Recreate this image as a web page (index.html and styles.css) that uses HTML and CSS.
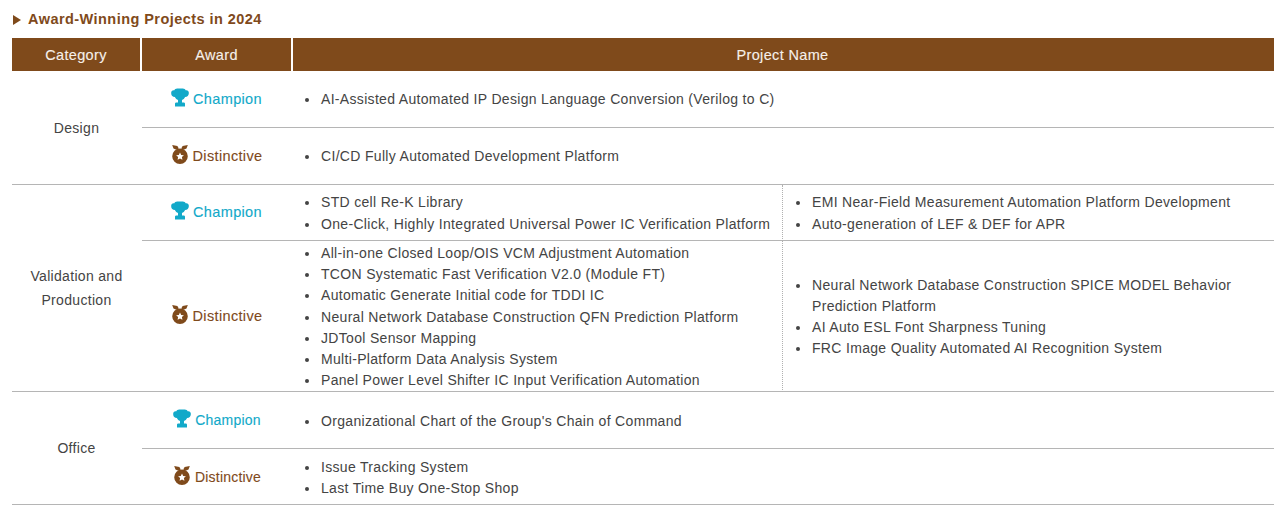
FILE: index.html
```html
<!DOCTYPE html>
<html lang="en">
<head>
<meta charset="utf-8">
<title>Award-Winning Projects in 2024</title>
<link rel="stylesheet" href="styles.css">
</head>
<body>
<svg class="defs" width="0" height="0" aria-hidden="true">
  <symbol id="trophy" viewBox="0 0 18 19">
    <path d="M6.200 0.500h5.600c1.500 0 2.500.8 2.800 1.800h.9c1.300 0 2.300 1 2.300 2.300v1c0 2-1.500 3.300-3.700 3.500-.7 1.500-1.800 2.500-3.100 3v2.400h1.700c.8 0 1.300.6 1.300 1.300v2.700H4v-2.700c0-.7.500-1.300 1.300-1.300H7v-2.400c-1.300-.5-2.400-1.500-3.100-3C1.700 9.100.2 7.600.2 5.600v-1c0-1.300 1-2.300 2.300-2.300h.9C3.700 1.300 4.700.5 6.200.5z"/>
  </symbol>
  <symbol id="medal" viewBox="0 0 18 19">
    <path d="M1.200 0 6.400 1.100 7.800 3.500 5.300 4.700 2.500 3.400z"/>
    <path d="M16.800 0 11.600 1.100 10.200 3.500 12.700 4.700 15.500 3.400z"/>
    <path fill-rule="evenodd" d="M9 3.400a7.800 7.800 0 1 1 0 15.600 7.800 7.800 0 0 1 0-15.600zM9 7.400l1.200 2.500 2.700.3-2 1.800.5 2.700L9 13.400l-2.400 1.300.5-2.700-2-1.800 2.700-.3z"/>
  </symbol>
</svg>
<h2 class="title"><span class="arrow"></span>Award-Winning Projects in 2024</h2>
<table class="awards">
  <colgroup>
    <col class="c-cat"><col class="c-award"><col class="c-left"><col class="c-right">
  </colgroup>
  <thead>
    <tr><th>Category</th><th>Award</th><th class="th-name" colspan="2">Project Name</th></tr>
  </thead>
  <tbody>
    <tr class="r57">
      <td class="cat" rowspan="2">Design</td>
      <td class="award champ"><svg class="ico"><use href="#trophy"/></svg>Champion</td>
      <td colspan="2"><ul><li>AI-Assisted Automated IP Design Language Conversion (Verilog to C)</li></ul></td>
    </tr>
    <tr class="r57">
      <td class="award dist"><svg class="ico"><use href="#medal"/></svg>Distinctive</td>
      <td colspan="2"><ul><li>CI/CD Fully Automated Development Platform</li></ul></td>
    </tr>
    <tr class="r56">
      <td class="cat" rowspan="2">Validation and<br>Production</td>
      <td class="award champ"><svg class="ico"><use href="#trophy"/></svg>Champion</td>
      <td class="split"><ul><li>STD cell Re-K Library</li><li>One-Click, Highly Integrated Universal Power IC Verification Platform</li></ul></td>
      <td class="second"><ul><li>EMI Near-Field Measurement Automation Platform Development</li><li>Auto-generation of LEF &amp; DEF for APR</li></ul></td>
    </tr>
    <tr class="r151">
      <td class="award dist"><svg class="ico"><use href="#medal"/></svg>Distinctive</td>
      <td class="split"><ul>
        <li>All-in-one Closed Loop/OIS VCM Adjustment Automation</li>
        <li>TCON Systematic Fast Verification V2.0 (Module FT)</li>
        <li>Automatic Generate Initial code for TDDI IC</li>
        <li>Neural Network Database Construction QFN Prediction Platform</li>
        <li>JDTool Sensor Mapping</li>
        <li>Multi-Platform Data Analysis System</li>
        <li>Panel Power Level Shifter IC Input Verification Automation</li>
      </ul></td>
      <td class="second"><ul>
        <li>Neural Network Database Construction SPICE MODEL Behavior Prediction Platform</li>
        <li>AI Auto ESL Font Sharpness Tuning</li>
        <li>FRC Image Quality Automated AI Recognition System</li>
      </ul></td>
    </tr>
    <tr class="r57">
      <td class="cat" rowspan="2">Office</td>
      <td class="award champ small"><svg class="ico"><use href="#trophy"/></svg>Champion</td>
      <td colspan="2"><ul><li>Organizational Chart of the Group's Chain of Command</li></ul></td>
    </tr>
    <tr class="r56">
      <td class="award dist small"><svg class="ico"><use href="#medal"/></svg>Distinctive</td>
      <td colspan="2"><ul><li>Issue Tracking System</li><li>Last Time Buy One-Stop Shop</li></ul></td>
    </tr>
  </tbody>
</table>
</body>
</html>
```
FILE: styles.css
```css
* { box-sizing: border-box; }
html, body { margin: 0; padding: 0; background: #fff; }
body {
  padding: 11px 8px 0 12px;
  font-family: "Liberation Sans", Arial, sans-serif;
  font-size: 14px;
  line-height: 21.2px;
  letter-spacing: 0.32px;
  color: #444;
}
.defs { position: absolute; }
.title {
  display: flex;
  align-items: center;
  margin: 0 0 10px;
  height: 17px;
  font-size: 14.5px;
  font-weight: bold;
  line-height: 17px;
  letter-spacing: 0.45px;
  color: #7f4a1b;
}
.arrow {
  width: 0;
  height: 0;
  margin: 0 7px 0 1px;
  border-left: 8px solid #7f4a1b;
  border-top: 5px solid transparent;
  border-bottom: 5px solid transparent;
}
.awards {
  width: 1262px;
  table-layout: fixed;
  border-collapse: separate;
  border-spacing: 0;
}
.c-cat { width: 130px; }
.c-award { width: 151px; }
.c-left { width: 490px; }
.c-right { width: 491px; }
th {
  height: 33px;
  padding: 2px 0 0;
  background: #7f4a1b;
  color: #f6f0ea;
  font-weight: normal;
  font-size: 14.5px;
  letter-spacing: 0.35px;
  -webkit-text-stroke: 0.12px #f6f0ea;
  border-right: 2px solid #fff;
}
th:last-child { border-right: 0; }
.th-name { padding-right: 2px; }
td {
  padding: 0;
  vertical-align: middle;
  border-bottom: 1px solid #b5b5b5;
}
.r56 td { height: 56px; }
.r57 td { height: 57px; }
.r151 td { height: 151px; }
.cat { text-align: center; padding-right: 1px; line-height: 24px; }
.award {
  text-align: center;
  font-size: 14.5px;
  letter-spacing: 0.35px;
  padding-right: 2px;
  -webkit-text-stroke: 0.12px currentColor;
}
.ico {
  width: 18px;
  height: 19px;
  margin-right: 4px;
  vertical-align: -3px;
  fill: currentColor;
  stroke: none;
}
.champ { color: #12a9c9; }
.dist { color: #7f4a1b; }
.small { padding-right: 1px; font-size: 14px; letter-spacing: 0.2px; }
.split { border-right: 1px dotted #b0b0b0; }
ul { margin: 0; padding: 2px 4px 0 28px; list-style: none; }
.second ul { padding-left: 29px; }
li { position: relative; }
li::before {
  content: "";
  position: absolute;
  left: -16px;
  top: 9px;
  width: 4px;
  height: 4px;
  border-radius: 50%;
  background: #444;
}
```
